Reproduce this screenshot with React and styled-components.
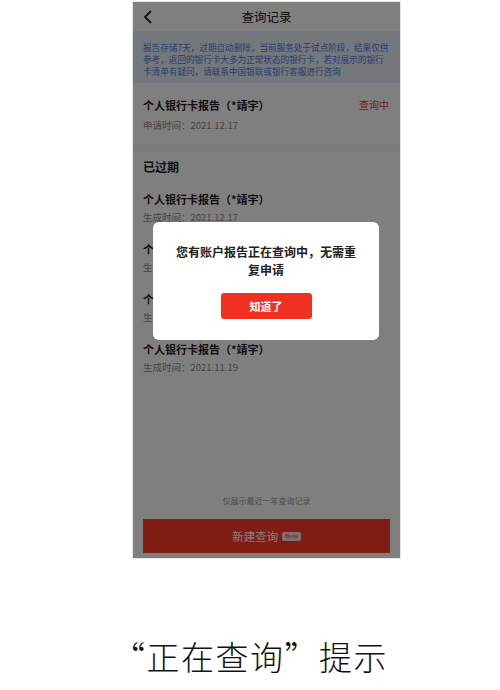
import React from 'react';
import styled, { createGlobalStyle } from 'styled-components';

const GlobalStyle = createGlobalStyle`
  html, body {
    margin: 0;
    padding: 0;
    background: #ffffff;
  }
  body {
    font-family: "Noto Sans CJK SC", "Noto Sans", sans-serif;
  }
`;

const noticeLines = [
  '报告存储7天，过期自动删除，当前服务处于试点阶段，结果仅供',
  '参考，返回的银行卡大多为正常状态的银行卡，若对展示的银行',
  '卡清单有疑问，请联系中国银联或银行客服进行咨询',
];

const expiredList = [
  { title: '个人银行卡报告（*靖宇）', time: '生成时间：2021.12.17' },
  { title: '个人银行卡报告（*靖宇）', time: '生成时间：2021.12.03' },
  { title: '个人银行卡报告（*靖宇）', time: '生成时间：2021.11.26' },
  { title: '个人银行卡报告（*靖宇）', time: '生成时间：2021.11.19' },
];

function BackIcon() {
  return (
    <svg width="10" height="14" viewBox="0 0 10 14">
      <polyline
        points="7.5,1.5 2,7 7.5,12.5"
        fill="none"
        stroke="#222"
        strokeWidth="1.8"
        strokeLinecap="round"
        strokeLinejoin="round"
      />
    </svg>
  );
}

function App() {
  const items = expiredList.map((item, index) => (
    <RecordItem key={index} $gap={index === 0 ? 17 : 18}>
      <RecordTitle>{item.title}</RecordTitle>
      <RecordTime>{item.time}</RecordTime>
    </RecordItem>
  ));

  return (
    <Page>
      <GlobalStyle />
      <PhoneWrap>
        <Phone>
          <NavBar>
            <BackButton>
              <BackIcon />
            </BackButton>
            <NavTitle>查询记录</NavTitle>
          </NavBar>
          <Notice>
            {noticeLines.map((line) => (
              <NoticeLine key={line}>{line}</NoticeLine>
            ))}
          </Notice>
          <CurrentRecord>
            <RecordHead>
              <RecordTitle>个人银行卡报告（*靖宇）</RecordTitle>
              <Status>查询中</Status>
            </RecordHead>
            <RecordTime>申请时间：2021.12.17</RecordTime>
          </CurrentRecord>
          <Divider />
          <SectionTitle>已过期</SectionTitle>
          {items}
          <Spacer />
          <FooterNote>仅展示最近一年查询记录</FooterNote>
          <NewButton>
            新建查询<Beta>Beta</Beta>
          </NewButton>
          <Mask />
          <Dialog>
            <DialogText>您有账户报告正在查询中，无需重复申请</DialogText>
            <DialogButton>知道了</DialogButton>
          </Dialog>
        </Phone>
      </PhoneWrap>
      <Caption lang="zh-CN">“正在查询”提示</Caption>
    </Page>
  );
}

export default App;

const Page = styled.div`
  width: 500px;
  height: 690px;
  display: flex;
  flex-direction: column;
  overflow: hidden;
`;

const PhoneWrap = styled.div`
  padding: 2px 0 0 133px;
`;

const Phone = styled.div`
  position: relative;
  width: 267px;
  height: 556px;
  background: #ffffff;
  display: flex;
  flex-direction: column;
  box-shadow: 0 0 0 1px #e4e4e4;
  overflow: hidden;
`;

const NavBar = styled.div`
  height: 29px;
  display: flex;
  align-items: center;
  justify-content: center;
  position: relative;
`;

const BackButton = styled.div`
  position: absolute;
  left: 10px;
  top: 8px;
  display: flex;
`;

const NavTitle = styled.span`
  font-size: 12.5px;
  color: #222;
`;

const Notice = styled.div`
  background: #e8eef8;
  color: #4a7fe0;
  font-size: 8.6px;
  line-height: 12px;
  padding: 10px 8px 6px 10px;
`;

const NoticeLine = styled.div`
  white-space: nowrap;
`;

const CurrentRecord = styled.div`
  padding: 14px 10px 12px 10px;
  display: flex;
  flex-direction: column;
  gap: 7px;
`;

const RecordHead = styled.div`
  display: flex;
  justify-content: space-between;
  align-items: center;
`;

const RecordTitle = styled.div`
  font-size: 11px;
  line-height: 14px;
  font-weight: 700;
  color: #1e1e1e;
`;

const Status = styled.span`
  font-size: 10px;
  color: #e8392c;
  padding-right: 1px;
`;

const RecordTime = styled.div`
  font-size: 9.5px;
  line-height: 13px;
  color: #8a8a8a;
`;

const Divider = styled.div`
  height: 6px;
  background: #f6f6f6;
  border-top: 1px solid #f0f0f0;
`;

const SectionTitle = styled.div`
  padding: 8px 10px 0 10px;
  font-size: 12px;
  line-height: 16px;
  font-weight: 700;
  color: #1e1e1e;
`;

const RecordItem = styled.div`
  padding: ${(p) => p.$gap}px 10px 0 10px;
  display: flex;
  flex-direction: column;
  gap: 5px;
`;

const Spacer = styled.div`
  flex: 1;
`;

const FooterNote = styled.div`
  text-align: center;
  font-size: 8px;
  line-height: 12px;
  color: #9a9a9a;
  margin-bottom: 12px;
`;

const NewButton = styled.div`
  margin: 0 10px 5px 10px;
  height: 34px;
  background: #ff3a2b;
  color: #ffffff;
  font-size: 11.5px;
  display: flex;
  align-items: center;
  justify-content: center;
  gap: 4px;
`;

const Beta = styled.span`
  font-size: 6px;
  line-height: 9px;
  padding: 0 3px;
  border-radius: 2px;
  background: rgba(255, 255, 255, 0.85);
  color: #ff3a2b;
  font-family: "Liberation Sans", sans-serif;
`;

const Mask = styled.div`
  position: absolute;
  inset: 0;
  background: rgba(0, 0, 0, 0.5);
`;

const Dialog = styled.div`
  position: absolute;
  left: 20px;
  top: 220px;
  width: 226px;
  box-sizing: border-box;
  padding: 21px 0 21px 0;
  background: #ffffff;
  border-radius: 6px;
  display: flex;
  flex-direction: column;
  align-items: center;
`;

const DialogText = styled.div`
  width: 184px;
  text-align: center;
  font-size: 12px;
  line-height: 18px;
  font-weight: 700;
  color: #222;
`;

const DialogButton = styled.div`
  margin-top: 14px;
  width: 91px;
  height: 26px;
  border-radius: 3px;
  background: #f2301f;
  color: #ffffff;
  font-size: 11px;
  font-weight: 700;
  display: flex;
  align-items: center;
  justify-content: center;
`;

const Caption = styled.div`
  margin-top: 78px;
  text-align: center;
  font-family: "Noto Sans CJK SC", serif;
  font-size: 33px;
  line-height: 40px;
  letter-spacing: 1.5px;
  color: #111;
  font-weight: 300;
`;
